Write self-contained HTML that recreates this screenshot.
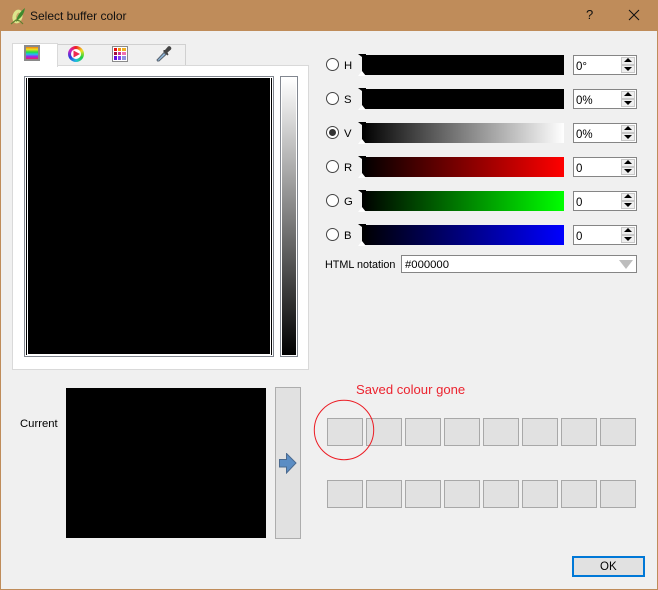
<!DOCTYPE html>
<html><head><meta charset="utf-8">
<style>
html,body{margin:0;padding:0;background:#f0f0f0}
body{width:658px;height:590px;position:relative;overflow:hidden;font-family:"Liberation Sans",sans-serif;font-size:11.3px;color:#000}
.a{position:absolute;box-sizing:border-box}
.t{position:absolute;white-space:nowrap;line-height:14px}
.tab{position:absolute;box-sizing:border-box;top:44px;height:22px;background:#f0f0f0;border:1px solid #d0d0d0;border-left:0}
.radio{position:absolute;box-sizing:border-box;left:326px;width:13px;height:13px;border:1px solid #444;border-radius:50%;background:#fff}
.sl{position:absolute;left:362px;width:202px;height:20px}
.spin{position:absolute;box-sizing:border-box;left:573px;width:64px;height:20px;background:#fff;border:1px solid #858585}
.spin span{position:absolute;left:2px;top:4px;line-height:14px;color:#000;font-size:11.5px}
.ub,.db{position:absolute;box-sizing:border-box;left:47px;width:14px;height:8px;background:#efefef;border:1px solid #c8c8c8}
.ub{top:1px}.db{top:9px}
.ub:after,.db:after{content:"";position:absolute;left:2px;width:0;height:0;border-left:4px solid transparent;border-right:4px solid transparent}
.ub:after{top:0;border-bottom:4px solid #000}
.db:after{top:1px;border-top:4px solid #000}
.hl{position:absolute;left:358px;width:8px;height:6px;background:#000;clip-path:polygon(0 0,100% 0,100% 100%)}
.tw{position:absolute;left:358px;width:8px;height:5px;background:#fff;clip-path:polygon(50% 0,100% 100%,0 100%)}
.sw{position:absolute;box-sizing:border-box;width:36px;height:28px;background:#e1e1e1;border:1px solid #a8a8a8}
</style></head>
<body>
<div class="a" style="left:0;top:0;width:658px;height:590px;border:1px solid #bf8c5a;border-top:0"></div>
<div class="a" style="left:0;top:0;width:658px;height:31px;background:#bf8c5a"></div>
<svg class="a" style="left:9px;top:6px" width="18" height="20" viewBox="0 0 18 20">
<ellipse cx="8.5" cy="10.5" rx="5" ry="7" fill="#dce68c" transform="rotate(15 8.5 10.5)"/>
<ellipse cx="9" cy="10.5" rx="1.8" ry="4" fill="#c9a868" transform="rotate(15 9 10.5)"/>
<path d="M7 16 Q8 8 16 2 Q15 9 10 13Z" fill="#3f8a2e"/>
<path d="M2 18 L7 14 L11 15 L14 18" stroke="#5f8030" stroke-width="1.2" fill="none"/>
</svg>
<div class="t" style="left:30px;top:9px;color:#111;font-size:12px">Select buffer color</div>
<div class="t" style="left:586px;top:8px;font-size:13px;color:#111">?</div>
<svg class="a" style="left:628px;top:9px" width="12" height="12"><path d="M1 1L11 11M11 1L1 11" stroke="#111" stroke-width="1" fill="none"/></svg>

<!-- tabs -->
<div class="tab" style="left:57px;width:43px"></div>
<div class="tab" style="left:99px;width:45px"></div>
<div class="tab" style="left:143px;width:43px"></div>
<div class="a" style="left:12px;top:65px;width:297px;height:305px;background:#fff;border:1px solid #d9d9d9"></div>
<div class="a" style="left:12px;top:43px;width:46px;height:24px;background:#fff;border:1px solid #d9d9d9;border-bottom:0"></div>
<!-- tab icons -->
<div class="a" style="left:24px;top:45px;width:16px;height:16px;border:2px solid #8a8a8a;background:#fff"><div style="width:12px;height:12px;background:linear-gradient(to bottom,#f08010,#f0e020 20%,#20e040 42%,#20c0f0 60%,#a020f0 80%,#f02060)"></div></div>
<div class="a" style="left:68px;top:46px;width:16px;height:16px;border-radius:50%;background:conic-gradient(#f02020,#f0e020,#20d040,#20c0e0,#2040e0,#d020c0,#f02020)"></div>
<div class="a" style="left:71px;top:49px;width:10px;height:10px;border-radius:50%;background:#fff"></div>
<svg class="a" style="left:68px;top:46px" width="16" height="16"><path d="M5.5 4.5L12 8L5.5 11.5Z" fill="#ee2a50"/></svg>
<div class="a" style="left:112px;top:46px;width:16px;height:16px;border:1px solid #8a8a8a;background:#fff;padding:1px;display:grid;grid-template-columns:repeat(3,3.2px);grid-template-rows:repeat(3,3.2px);gap:1px">
<i style="background:#e81010"></i><i style="background:#f09010"></i><i style="background:#f0b020"></i>
<i style="background:#a01040"></i><i style="background:#d03090"></i><i style="background:#f070b0"></i>
<i style="background:#6010e0"></i><i style="background:#8040f0"></i><i style="background:#9090e0"></i></div>
<svg class="a" style="left:156px;top:45px" width="17" height="17" viewBox="0 0 17 17">
<path d="M1.5 16L1 15L8 7.5L10 9.5L3 16Z" fill="#8fb6d8" stroke="#5a6470" stroke-width="1"/>
<path d="M7 6L11.5 10.5L12.5 9.5L11.5 7.5L15 4.5A2.2 2.2 0 0 0 12 1.5L9 5L8 5Z" fill="#444"/></svg>

<!-- colour box -->
<div class="a" style="left:24px;top:76px;width:250px;height:281px;background:#000;border:1px solid #828790"></div>
<div class="a" style="left:25px;top:77px;width:248px;height:279px;border:1px solid #fff"></div>
<div class="a" style="left:27px;top:78px;width:244px;height:277px;border:1px solid #fff;border-top:0"></div>
<div class="a" style="left:280px;top:76px;width:18px;height:281px;border:1px solid #828790;padding:1px;background:#fff"><div style="width:100%;height:100%;background:linear-gradient(to bottom,#fff,#000)"></div></div>

<!-- sliders -->
<div class="radio" style="top:58px"></div><div class="t" style="left:344px;top:59px">H</div>
<div class="radio" style="top:92px"></div><div class="t" style="left:344px;top:93px">S</div>
<div class="radio" style="top:126px"></div><div class="a" style="left:329px;top:129px;width:7px;height:7px;border-radius:50%;background:#333"></div><div class="t" style="left:344px;top:127px">V</div>
<div class="radio" style="top:160px"></div><div class="t" style="left:344px;top:161px">R</div>
<div class="radio" style="top:194px"></div><div class="t" style="left:344px;top:195px">G</div>
<div class="radio" style="top:228px"></div><div class="t" style="left:344px;top:229px">B</div>

<div class="sl" style="top:55px;background:#000"></div>
<div class="sl" style="top:89px;background:#000"></div>
<div class="sl" style="top:123px;background:linear-gradient(to right,#000,#fff)"></div>
<div class="sl" style="top:157px;background:linear-gradient(to right,#000,#f00)"></div>
<div class="sl" style="top:191px;background:linear-gradient(to right,#000,#0f0)"></div>
<div class="sl" style="top:225px;background:linear-gradient(to right,#000,#00f)"></div>

<div class="hl" style="top:54px"></div><div class="tw" style="top:71px"></div>
<div class="hl" style="top:88px"></div><div class="tw" style="top:105px"></div>
<div class="hl" style="top:122px"></div><div class="tw" style="top:139px"></div>
<div class="hl" style="top:156px"></div><div class="tw" style="top:173px"></div>
<div class="hl" style="top:190px"></div><div class="tw" style="top:207px"></div>
<div class="hl" style="top:224px"></div><div class="tw" style="top:241px"></div>

<!-- spins -->
<div class="spin" style="top:55px"><span>0°</span><i class="ub"></i><i class="db"></i></div>
<div class="spin" style="top:89px"><span>0%</span><i class="ub"></i><i class="db"></i></div>
<div class="spin" style="top:123px"><span>0%</span><i class="ub"></i><i class="db"></i></div>
<div class="spin" style="top:157px"><span>0</span><i class="ub"></i><i class="db"></i></div>
<div class="spin" style="top:191px"><span>0</span><i class="ub"></i><i class="db"></i></div>
<div class="spin" style="top:225px"><span>0</span><i class="ub"></i><i class="db"></i></div>

<!-- html notation -->
<div class="t" style="left:325px;top:258px;font-size:10.8px">HTML notation</div>
<div class="a" style="left:401px;top:255px;width:236px;height:18px;background:#fff;border:1px solid #858585"></div>
<div class="t" style="left:405px;top:258px">#000000</div>
<svg class="a" style="left:619px;top:260px" width="14" height="10"><path d="M0 0H14L7 9Z" fill="#bdbdbd"/></svg>

<!-- current -->
<div class="t" style="left:20px;top:417px">Current</div>
<div class="a" style="left:66px;top:388px;width:200px;height:150px;background:#000"></div>
<div class="a" style="left:275px;top:387px;width:26px;height:152px;background:#e1e1e1;border:1px solid #adadad"></div>
<svg class="a" style="left:279px;top:453px" width="18" height="21" viewBox="0 0 18 21"><path d="M.5 6.5H7.5V.5L17 10L7.5 20V14H.5Z" fill="#5b8dc4" stroke="#4a6a90" stroke-width="1"/></svg>

<!-- swatches -->
<div class="sw" style="left:327px;top:418px"></div>
<div class="sw" style="left:366px;top:418px"></div>
<div class="sw" style="left:405px;top:418px"></div>
<div class="sw" style="left:444px;top:418px"></div>
<div class="sw" style="left:483px;top:418px"></div>
<div class="sw" style="left:522px;top:418px"></div>
<div class="sw" style="left:561px;top:418px"></div>
<div class="sw" style="left:600px;top:418px"></div>
<div class="sw" style="left:327px;top:480px"></div>
<div class="sw" style="left:366px;top:480px"></div>
<div class="sw" style="left:405px;top:480px"></div>
<div class="sw" style="left:444px;top:480px"></div>
<div class="sw" style="left:483px;top:480px"></div>
<div class="sw" style="left:522px;top:480px"></div>
<div class="sw" style="left:561px;top:480px"></div>
<div class="sw" style="left:600px;top:480px"></div>

<div class="t" style="left:356px;top:383px;color:#ec2430;font-size:13.1px">Saved colour gone</div>
<svg class="a" style="left:313px;top:399px" width="62" height="62"><circle cx="31" cy="31" r="29.7" fill="none" stroke="#ec1c24" stroke-width="1"/></svg>

<!-- ok -->
<div class="a" style="left:572px;top:556px;width:73px;height:21px;background:#e1e1e1;border:2px solid #0078d7"></div>
<div class="t" style="left:600px;top:560px;font-size:11.5px">OK</div>
</body></html>
